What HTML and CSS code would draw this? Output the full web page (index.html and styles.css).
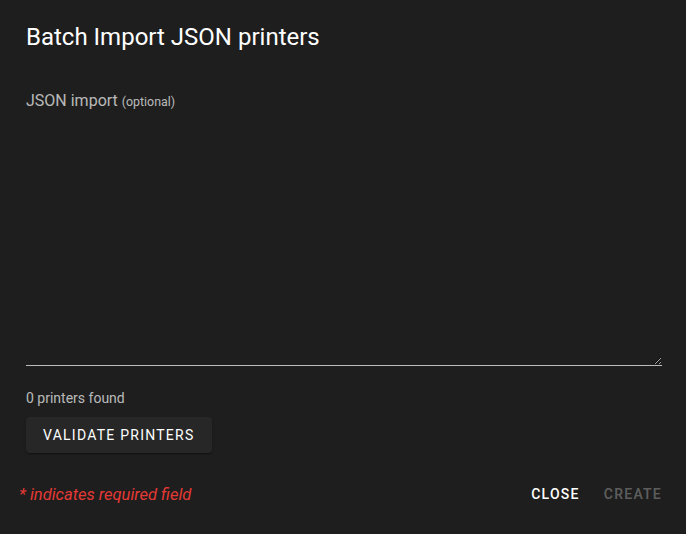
FILE: index.html
```html
<!DOCTYPE html>
<html>
<head>
<meta charset="utf-8">
<link rel="stylesheet" href="styles.css">
</head>
<body>
<div class="card">
  <div class="title">Batch Import JSON printers</div>
  <div class="content">
    <label class="label">JSON import <small>(optional)</small></label>
    <textarea class="area"></textarea>
    <div class="found">0 printers found</div>
    <button class="btn">Validate printers</button>
  </div>
  <div class="actions">
    <span class="req">* indicates required field</span>
    <span class="spacer"></span>
    <button class="text-btn">Close</button>
    <button class="text-btn disabled">Create</button>
  </div>
</div>
</body>
</html>
```

FILE: styles.css
```css
html, body {
  margin: 0;
  padding: 0;
  background: #1e1e1e;
  font-family: Roboto, "Noto Sans", sans-serif;
  color: #fff;
}
.card {
  width: 686px;
  height: 534px;
  box-sizing: border-box;
  display: flex;
  flex-direction: column;
}
.title {
  padding: 21px 26px 0;
  font-size: 24px;
  line-height: 32px;
  color: #fff;
}
.content {
  padding: 0 24px 0 26px;
  display: flex;
  flex-direction: column;
}
.label {
  margin-top: 38px;
  font-size: 16px;
  line-height: 20px;
  color: rgba(255,255,255,0.7);
}
.label small {
  font-size: 12.4px;
}
.area {
  margin-top: 4px;
  height: 250px;
  width: 100%;
  box-sizing: border-box;
  background: transparent;
  border: none;
  border-bottom: 1px solid rgba(255,255,255,0.7);
  color: #fff;
  outline: none;
  resize: vertical;
  padding: 0;
}
.found {
  margin-top: 22px;
  font-size: 14px;
  line-height: 20px;
  color: rgba(255,255,255,0.7);
}
.btn {
  margin-top: 9px;
  align-self: flex-start;
  height: 36px;
  padding: 0 17px;
  border: none;
  border-radius: 4px;
  background: #272727;
  color: #fff;
  font-family: Roboto, sans-serif;
  font-size: 14px;
  font-weight: 400;
  letter-spacing: 1.25px;
  text-transform: uppercase;
  box-shadow: 0 2px 1px -1px rgba(0,0,0,.2), 0 1px 1px 0 rgba(0,0,0,.14), 0 1px 3px 0 rgba(0,0,0,.12);
}
.actions {
  margin-top: 23px;
  padding: 0 16px 0 19px;
  display: flex;
  align-items: center;
  height: 36px;
}
.req {
  font-size: 16.5px;
  font-style: italic;
  color: #e53935;
}
.spacer { flex: 1; }
.text-btn {
  background: transparent;
  border: none;
  height: 36px;
  padding: 0 8px;
  margin-left: 10px;
  color: #fff;
  font-family: Roboto, sans-serif;
  font-size: 14px;
  font-weight: 500;
  letter-spacing: 1.25px;
  text-transform: uppercase;
}
.text-btn:first-of-type { margin-right: 8px; }
.text-btn.disabled {
  margin-left: 0;
  color: rgba(255,255,255,0.3);
}
```
